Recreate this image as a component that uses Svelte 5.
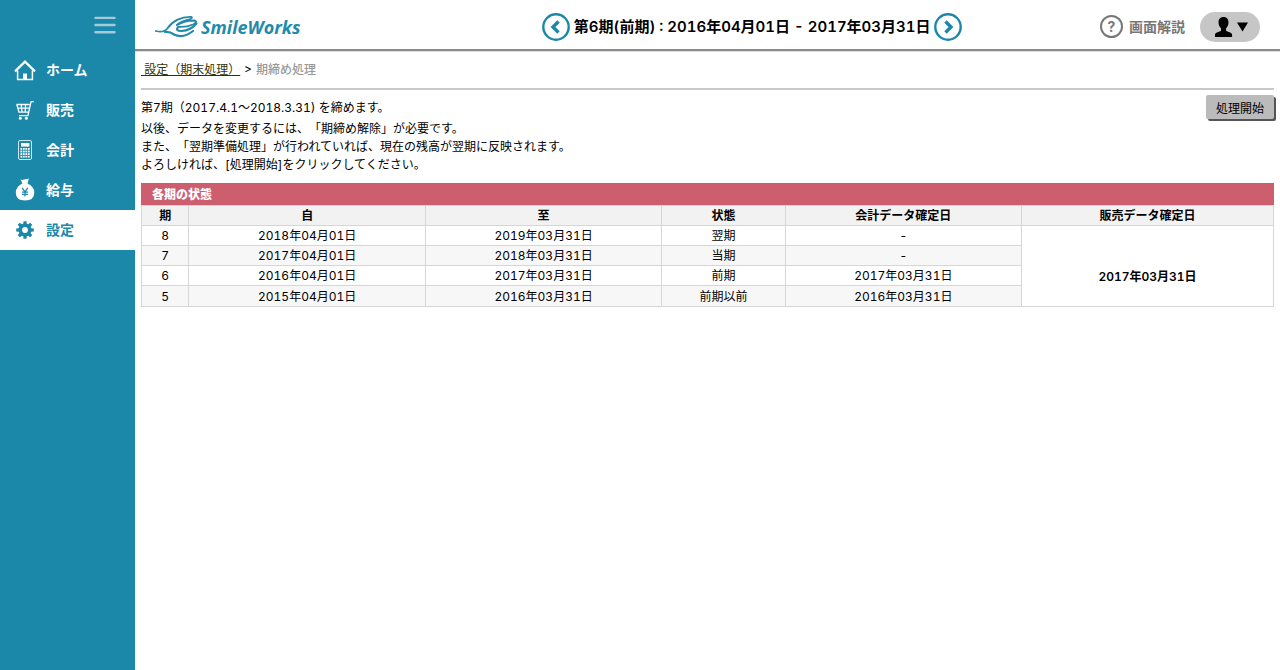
<script>
  const menu = [
    { id: 'home', label: 'ホーム' },
    { id: 'sales', label: '販売' },
    { id: 'accounting', label: '会計' },
    { id: 'payroll', label: '給与' },
    { id: 'settings', label: '設定' }
  ];

  const periods = [
    { no: 8, from: '2018年04月01日', to: '2019年03月31日', status: '翌期', fixed: '-' },
    { no: 7, from: '2017年04月01日', to: '2018年03月31日', status: '当期', fixed: '-' },
    { no: 6, from: '2016年04月01日', to: '2017年03月31日', status: '前期', fixed: '2017年03月31日' },
    { no: 5, from: '2015年04月01日', to: '2016年03月31日', status: '前期以前', fixed: '2016年03月31日' }
  ];

  const salesFixed = '2017年03月31日';

  let active = $state('settings');
</script>

<div class="layout">
  <aside class="sidebar">
    <button class="toggle" aria-label="メニュー">
      <svg width="24" height="20" viewBox="0 0 24 20" stroke="#a3ccdb" stroke-width="2.4" stroke-linecap="round">
        <path d="M2.5 2.9h19M2.5 10h19M2.5 17.3h19" />
      </svg>
    </button>
    <nav>
      {#each menu as item}
        <a href="#{item.id}" class:active={active === item.id} onclick={() => (active = item.id)}>
          <svg class="icon" viewBox="0 0 24 24">
            {#if item.id === 'home'}
              <path d="M2 13.4 12 3.6l10 9.8" fill="none" stroke="currentColor" stroke-width="2.2" />
              <path d="M4.6 12.5v8.9h14.8v-8.9" fill="none" stroke="currentColor" stroke-width="1.5" />
              <path d="M10 15.5h4V21h-4z" fill="currentColor" />
            {:else if item.id === 'sales'}
              <g fill="none" stroke="currentColor" stroke-width="1.3">
                <path d="M20.8 3.7h-2.7l-3.2 14H6" />
                <path d="M3.4 6.5h13.4M4.4 10.2h11.8M5.4 14.1h10M3.8 6.5l2.2 7.6M8.2 6.5l.9 7.6M12.6 6.5l-.4 7.6" />
              </g>
              <circle cx="7.3" cy="20.2" r="1.5" fill="currentColor" />
              <circle cx="13.4" cy="20.2" r="1.5" fill="currentColor" />
            {:else if item.id === 'accounting'}
              <rect x="5.5" y="2.5" width="13" height="19" rx="1.5" fill="none" stroke="currentColor" opacity="0.8" />
              <path d="M8 5h8.4v3.6H8z" fill="currentColor" />
              <g fill="currentColor">
                {#each [10, 12.6, 15.2, 17.8] as y}
                  {#each [7.4, 9.9, 12.4, 14.9] as x}
                    <rect {x} {y} width="1.8" height="1.8" />
                  {/each}
                {/each}
              </g>
            {:else if item.id === 'payroll'}
              <path
                d="M7.5 1.5q2 .8 3.4.1 2-.8 3.4-.6l1.6-.4-1.4 4.9q6.8 3.2 6.8 9 0 8-9.3 8T2.8 14.500q0-5.800 6.600-9z"
                fill="currentColor"
              />
              <path d="m9.2 9.9 2.8 4 2.800-4M12 13.500v5M9 14.100h6M9 16.300h6" fill="none" stroke="#1b87a9" stroke-width="1.2" />
            {:else}
              <circle cx="12" cy="12" r="4.7" fill="none" stroke="currentColor" stroke-width="3.6" />
              <g fill="currentColor">
                {#each [0, 45, 90, 135, 180, 225, 270, 315] as angle}
                  <path d="M10.2 6.5l.3-3.3h3l.3 3.3z" transform="rotate({angle} 12 12)" />
                {/each}
              </g>
            {/if}
          </svg>
          <span>{item.label}</span>
        </a>
      {/each}
    </nav>
  </aside>

  <div class="page">
    <header>
      <a href="#home" class="logo">
        <svg width="44" height="24" viewBox="0 0 44 24" fill="none" stroke="#238aa9" stroke-linecap="round" stroke-linejoin="round">
          <path d="M.8 16q8 2.2 11.5-2.5C17 6.5 26 1.5 36 1.8q2.5.7-1.5 2.7-8 1.5-12.5 5.5" stroke-width="1.8" />
          <path d="M22 10q8-4.500 17-4.500 5 1-1 4-7 3-14.500 2.300" stroke-width="1.8" />
          <path d="M23.500 11.800q-4 4 3 4.200 9-.5 15-7.500" stroke-width="2.2" />
          <path d="M10 17q5-.5 9 2.500 9 4.500 19-3.500" stroke-width="2.2" />
        </svg>
        <span>SmileWorks</span>
      </a>

      <div class="period">
        <button aria-label="前の期">
          <svg width="28" height="28" viewBox="0 0 28 28" fill="none" stroke="#1b87a9">
            <circle cx="14" cy="14" r="12.7" stroke-width="2.4" />
            <path d="m16.5 8.5-5.5 5.5 5.5 5.5" stroke-width="3.4" />
          </svg>
        </button>
        <span>第6期(前期) : 2016年04月01日 - 2017年03月31日</span>
        <button aria-label="次の期">
          <svg width="28" height="28" viewBox="0 0 28 28" fill="none" stroke="#1b87a9">
            <circle cx="14" cy="14" r="12.7" stroke-width="2.4" />
            <path d="m11.5 8.5 5.5 5.5-5.5 5.5" stroke-width="3.4" />
          </svg>
        </button>
      </div>

      <div class="tools">
        <a href="#help" class="help">
          <span class="mark">?</span>
          <span>画面解説</span>
        </a>
        <button class="user" aria-label="ユーザー">
          <svg width="36" height="22" viewBox="0 0 36 22">
            <path
              d="M11.5 1c3.3 0 5 2.2 5 5.3 0 2.6-.9 4.6-2.4 6v2.4c1.6 1.2 6 1.6 6 4.1V21H3v-2.2c0-2.5 4.4-2.900 6-4.100v-2.400c-1.500-1.400-2.500-3.400-2.500-6C6.500 3.200 8.200 1 11.500 1z"
            />
            <path d="M25 6.5h11l-5.5 9z" />
          </svg>
        </button>
      </div>
    </header>

    <main>
      <div class="breadcrumb">
        <a href="#closing">&nbsp;設定（期末処理）</a>
        <span>&gt;</span>
        <span class="current">期締め処理</span>
      </div>

      <section class="intro">
        <div>
          <p class="lead">第7期（2017.4.1～2018.3.31) を締めます。</p>
          <p>
            以後、データを変更するには、「期締め解除」が必要です。<br />
            また、「翌期準備処理」が行われていれば、現在の残高が翌期に反映されます。<br />
            よろしければ、[処理開始]をクリックしてください。
          </p>
        </div>
        <button class="start">処理開始</button>
      </section>

      <h2>各期の状態</h2>
      <table>
        <thead>
          <tr>
            <th class="no">期</th>
            <th class="date">自</th>
            <th class="date">至</th>
            <th class="status">状態</th>
            <th class="date">会計データ確定日</th>
            <th>販売データ確定日</th>
          </tr>
        </thead>
        <tbody>
          {#each periods as p, i}
            <tr>
              <td>{p.no}</td>
              <td>{p.from}</td>
              <td>{p.to}</td>
              <td>{p.status}</td>
              <td>{p.fixed}</td>
              {#if i === 0}
                <td class="sales" rowspan={periods.length}>{salesFixed}</td>
              {/if}
            </tr>
          {/each}
        </tbody>
      </table>
    </main>
  </div>
</div>

<style>
  :global(body) {
    margin: 0;
    background: #fff;
    color: #000;
    font-family: Inter, 'Noto Sans CJK JP', sans-serif;
    font-size: 12px;
    font-variant-numeric: tabular-nums;
    text-spacing-trim: space-all;
  }

  button {
    padding: 0;
    border: 0;
    background: none;
    color: inherit;
    font: inherit;
    cursor: pointer;
  }

  svg {
    display: block;
    flex-shrink: 0;
  }

  .layout {
    display: flex;
    min-height: 100vh;
  }

  .sidebar {
    width: 135px;
    flex-shrink: 0;
    background: #1b87a9;
  }

  .toggle {
    display: flex;
    align-items: center;
    height: 50px;
    margin-left: auto;
    padding-right: 18px;
  }

  nav a {
    display: flex;
    align-items: center;
    gap: 9px;
    height: 40px;
    padding-left: 13px;
    color: #fff;
    font-family: 'Noto Sans CJK JP', sans-serif;
    font-size: 14px;
    font-weight: 700;
    text-decoration: none;
  }

  nav span {
    padding-bottom: 2px;
  }

  nav a.active {
    background: #fff;
    color: #1b87a9;
  }

  .icon {
    width: 24px;
    height: 24px;
  }

  .page {
    flex: 1;
    min-width: 0;
  }

  header {
    display: grid;
    grid-template-columns: 13fr auto 10fr;
    align-items: center;
    height: 49px;
    padding: 0 20px;
    border-bottom: 2px solid #8c8c8c;
    box-shadow: 0 1px 0 #ddd;
  }

  .logo {
    display: flex;
    align-items: center;
    gap: 2px;
    padding-top: 4px;
    color: #238aa9;
    font-family: 'Open Sans', sans-serif;
    font-size: 18px;
    font-style: italic;
    font-weight: 700;
    line-height: 24px;
    text-decoration: none;
  }

  .period {
    display: flex;
    align-items: center;
    gap: 4px;
    padding-top: 4px;
    font-size: 15px;
    font-weight: 600;
    white-space: nowrap;
  }

  .period span {
    padding-bottom: 2px;
  }

  .tools {
    display: flex;
    align-items: center;
    justify-content: flex-end;
    gap: 15px;
    padding-top: 4px;
  }

  .help {
    display: flex;
    align-items: center;
    gap: 6px;
    color: #777;
    font-size: 14px;
    font-weight: 700;
    text-decoration: none;
    white-space: nowrap;
  }

  .help span:last-child {
    padding-bottom: 2px;
  }

  .mark {
    box-sizing: border-box;
    width: 23px;
    height: 23px;
    border: 2px solid #777;
    border-radius: 50%;
    line-height: 19px;
    text-align: center;
  }

  .user {
    display: flex;
    align-items: center;
    justify-content: center;
    width: 60px;
    height: 30px;
    border-radius: 15px;
    background: #c6c6c6;
  }

  main {
    padding: 0 6px;
  }

  .breadcrumb {
    display: flex;
    align-items: center;
    gap: 4px;
    height: 35px;
    padding-bottom: 2px;
    border-bottom: 2px solid #c8c8c8;
  }

  .breadcrumb a {
    color: #330;
  }

  .current {
    color: #999;
    font-weight: 500;
  }

  .intro {
    display: flex;
    justify-content: space-between;
    align-items: flex-start;
    padding: 5px 0 9px;
  }

  .intro p {
    margin: 0;
    line-height: 18px;
  }

  .intro .lead {
    padding: 4px 0 3px;
  }

  .start {
    width: 68px;
    height: 24px;
    flex-shrink: 0;
    border-radius: 2px;
    background: #bbb;
    box-shadow: 2px 2px 0 #555;
  }

  h2 {
    margin: 0;
    padding: 1px 0 0 11px;
    background: #cd5e6e;
    color: #fff;
    font-size: 12px;
    font-weight: 900;
    line-height: 21px;
  }

  table {
    width: 100%;
    border-collapse: collapse;
    table-layout: fixed;
  }

  th,
  td {
    padding: 0;
    border: 1px solid #d6d6d6;
    line-height: 19px;
    text-align: center;
  }

  th {
    background: #f2f2f2;
    font-weight: 600;
  }

  tbody tr:nth-child(even) td {
    background: #f7f7f7;
  }

  tbody tr:last-child td {
    padding-top: 1px;
  }

  .no {
    width: 4.1%;
  }

  .date {
    width: 20.8%;
  }

  .status {
    width: 10.8%;
  }

  .sales {
    padding-top: 20px;
    font-weight: 600;
  }
</style>
